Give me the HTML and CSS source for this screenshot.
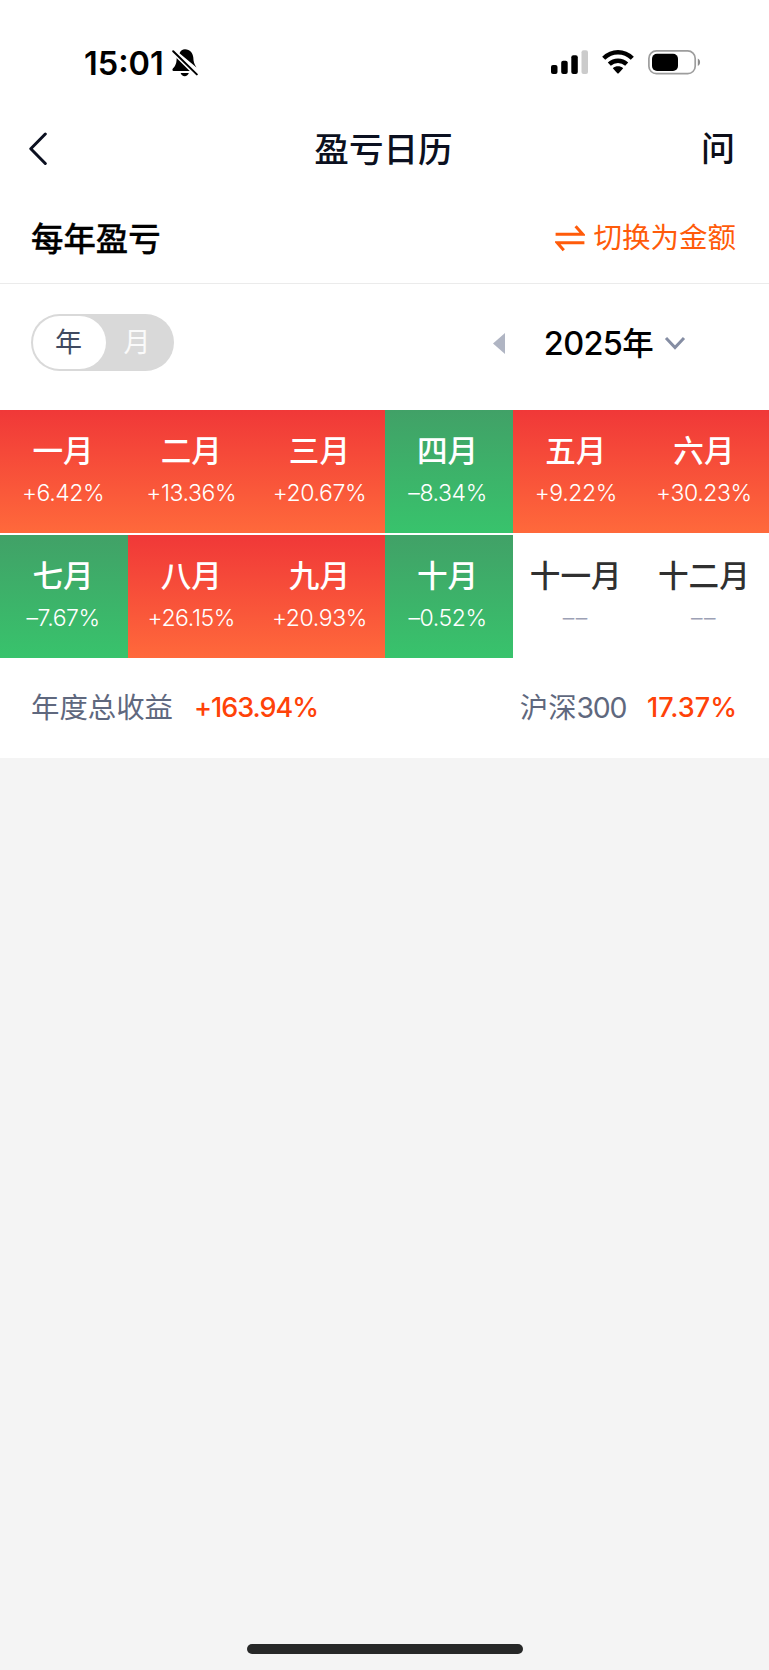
FILE: index.html
```html
<!DOCTYPE html>
<html lang="zh-CN">
<head>
    <meta charset="UTF-8">
    <meta name="viewport" content="width=device-width, initial-scale=1.0">
    <title>盈亏日历</title>
    <link rel="stylesheet" href="styles.css">
</head>
<body>

<div class="status">
    <div class="status-left">
        <span class="time">15:01</span>
        <svg class="bell" width="26" height="28" viewBox="0 0 26 28">
            <path d="M7.5 4.2C8.6 1.8 10.5.3 13 .3c5 0 8 4 8.3 8.3 .2 4.4 .8 6.4 3.2 9.9L7.5 4.2z"/>
            <path d="M4.7 7.4 20.5 22H1.6C.3 22 .1 20.6.9 19.6 3.6 16.5 4.7 14.5 4.7 7.4z"/>
            <path d="M8.6 24h8.2c-.6 2-2.1 3.2-4.1 3.2S9.2 26 8.6 24z"/>
            <path class="slash-gap" d="M1.2 2.2 24.8 25.4"/>
            <path class="slash" d="M1.2 2.2 24.8 25.4"/>
        </svg>
    </div>
    <div class="status-right">
        <svg class="signal" width="38" height="24" viewBox="0 0 38 24">
            <rect x="0" y="15" width="6.5" height="9" rx="2"/>
            <rect x="10.2" y="10.7" width="6.5" height="13.3" rx="2"/>
            <rect x="20.3" y="5.3" width="6.5" height="18.7" rx="2"/>
            <rect x="30.5" y="0.3" width="6.5" height="23.7" rx="2" fill="#cbcbcb"/>
        </svg>
        <svg class="wifi" width="32" height="24" viewBox="0 0 32 24">
            <path class="arc" d="M1.7 8.3C10 .2 22 .2 30.3 8.3"/>
            <path class="arc" d="M7.3 14.2c5-4.7 12.4-4.7 17.4 0"/>
            <path d="M10.8 18.3c3-2.6 7.4-2.6 10.4 0L16.7 23.2q-.7.6-1.4 0z"/>
        </svg>
        <svg class="battery" width="53" height="25" viewBox="0 0 53 25">
            <rect x="0.9" y="0.9" width="46.3" height="22.8" rx="7.5" fill="none" stroke="#9d9d9d" stroke-width="1.7"/>
            <rect x="4" y="3.8" width="26" height="17.2" rx="5"/>
            <path d="M49.8 8.5c3 1.3 3 6.2 0 7.5z" fill="#8c8c8c"/>
        </svg>
    </div>
</div>

<div class="nav">
    <svg class="back" width="20" height="34" viewBox="0 0 20 34">
        <path d="M17.3 2 2.8 16.7l14.5 14.8"/>
    </svg>
    <h1>盈亏日历</h1>
    <span class="ask">问</span>
</div>

<div class="section-head">
    <h2>每年盈亏</h2>
    <div class="switch">
        <svg width="30" height="28" viewBox="0 0 30 28">
            <path d="M.6 10.3h27.2L20.6 2.2M29.4 18.8H2.2l6.6 7.4"/>
        </svg>
        <span>切换为金额</span>
    </div>
</div>

<div class="filter">
    <div class="toggle">
        <span class="on">年</span>
        <span class="off">月</span>
    </div>
    <div class="year">
        <svg class="prev" width="12" height="21" viewBox="0 0 12 21"><path d="M12 0v21L0 10.5z"/></svg>
        <span class="year-text">2025<b>年</b></span>
        <svg class="down" width="22" height="16" viewBox="0 0 22 16"><path d="M2 3l9 9.5L20 3"/></svg>
    </div>
</div>

<div class="months">
    <div class="month up"><b>一月</b><span>+6.42%</span></div>
    <div class="month up"><b>二月</b><span>+13.36%</span></div>
    <div class="month up"><b>三月</b><span>+20.67%</span></div>
    <div class="month loss"><b>四月</b><span>–8.34%</span></div>
    <div class="month up"><b>五月</b><span>+9.22%</span></div>
    <div class="month up"><b>六月</b><span>+30.23%</span></div>
    <div class="month loss"><b>七月</b><span>–7.67%</span></div>
    <div class="month up"><b>八月</b><span>+26.15%</span></div>
    <div class="month up"><b>九月</b><span>+20.93%</span></div>
    <div class="month loss"><b>十月</b><span>–0.52%</span></div>
    <div class="month empty"><b>十一月</b><span>––</span></div>
    <div class="month empty"><b>十二月</b><span>––</span></div>
</div>

<div class="summary">
    <div class="item"><span>年度总收益</span><strong class="total">+163.94%</strong></div>
    <div class="item"><span>沪深<i>300</i></span><strong>17.37%</strong></div>
</div>

<div class="rest">
    <div class="home-bar"></div>
</div>

</body>
</html>
```

FILE: styles.css
```css
* {box-sizing: border-box; margin: 0; padding: 0;}
body {display: flex; flex-direction: column; height: 1670px; background: #fff; color: #000; font-family: Inter, "Noto Sans CJK SC", sans-serif; overflow: hidden;}
svg {display: block; flex: none;}
span, strong, h1, h2 {white-space: nowrap;}

.status {display: flex; justify-content: space-between; height: 100px; padding: 49px 68px 0 84px;}
.status-left {display: flex; height: 28px; align-items: center;}
.time {width: 88px; font-size: 32.5px; font-weight: 600; letter-spacing: 0; line-height: 28px; padding-top: 1px;}
.bell .slash {fill: none; stroke: #000; stroke-width: 2; stroke-linecap: round;}
.bell .slash-gap {fill: none; stroke: #fff; stroke-width: 5;}
.status-right {display: flex; padding-top: 1px;}
.wifi {margin: 0 14px 0 13px;}
.wifi .arc {fill: none; stroke: #000; stroke-width: 4.4;}

.nav {display: flex; justify-content: space-between; align-items: center; height: 97px; padding: 0 34px 0 28px;}
.back path {fill: none; stroke: #0b1020; stroke-width: 3; stroke-linecap: round; stroke-linejoin: round;}
.nav h1 {font-size: 34.6px; font-weight: 500; line-height: 48px; color: #0b1020; padding-left: 18px;}
.ask {font-size: 34px; font-weight: 500; line-height: 48px; color: #0b0e18;}

.section-head {display: flex; justify-content: space-between; align-items: center; height: 87px; padding: 0 33px 4px 31px; border-bottom: 1px solid #ebebeb;}
.section-head h2 {font-size: 32.4px; font-weight: 500; line-height: 48px; padding-top: 4px; -webkit-text-stroke: 0.3px #000;}
.switch {display: flex; align-items: center; gap: 8px; font-size: 28.5px; line-height: 40px; color: #ff5b0a;}
.switch path {fill: none; stroke: #ff5b0a; stroke-width: 3;}

.filter {display: flex; justify-content: space-between; align-items: center; height: 126px; padding: 0 83px 8px 31px;}
.toggle {display: flex; width: 143px; height: 57px; margin-bottom: 2px; padding: 2px; border-radius: 29px; background: #d9d9d9; font-size: 27px; line-height: 54px; text-align: center;}
.toggle .on {width: 73px; border-radius: 27px; background: #fff; color: #404a60; padding-right: 2px;}
.toggle .off {flex: 1; color: #fafafa; padding-right: 4px;}
.year {display: flex; align-items: center;}
.prev {fill: #b0b5c3; margin-right: 39px;}
.year-text {font-size: 32.5px; font-weight: 500; line-height: 40px; margin-right: 11px; padding-top: 2px; letter-spacing: -0.7px;}
.year-text b {font-size: 31.5px; font-weight: 500;}
.down path {fill: none; stroke: #858da3; stroke-width: 3;}

.months {display: grid; grid-template-columns: repeat(6, 1fr); grid-auto-rows: 123px; row-gap: 2px;}
.month {display: flex; flex-direction: column; align-items: center; padding: 21px 2px 0 0; color: #fff;}
.month b {font-size: 30.6px; font-weight: 500; line-height: 40px;}
.month span {margin-top: 8px; font-size: 23px; font-weight: 300; line-height: 28px; letter-spacing: -0.4px;}
.up {background: linear-gradient(#f03838, #ff693b);}
.loss {background: linear-gradient(#41a167, #38c36c);}
.empty b {color: #303030;}
.empty span {color: #9ca1b5; letter-spacing: 1.5px;}

.summary {display: flex; justify-content: space-between; align-items: center; height: 100px; padding: 0 32px 0 31px;}
.item {display: flex; align-items: center; gap: 21px; line-height: 40px;}
.item span {font-size: 28.4px; color: #5f687e;}
.item i {font-style: normal; letter-spacing: -1.3px;}
.item strong {font-size: 27px; font-weight: 500; color: #ff4208;}
.item .total {letter-spacing: -1px;}

.rest {flex: 1; display: flex; justify-content: center; align-items: flex-end; padding-bottom: 16px; background: #f4f4f4;}
.home-bar {width: 276px; height: 10px; border-radius: 5px; background: #272828;}
```
